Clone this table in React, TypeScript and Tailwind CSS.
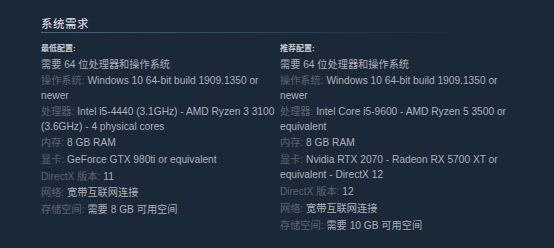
import React from 'react';

type Row = { label?: string; value: string };

const minimum: Row[] = [
  { value: '需要 64 位处理器和操作系统' },
  { label: '操作系统:', value: 'Windows 10 64-bit build 1909.1350 or newer' },
  { label: '处理器:', value: 'Intel i5-4440 (3.1GHz) - AMD Ryzen 3 3100 (3.6GHz) - 4 physical cores' },
  { label: '内存:', value: '8 GB RAM' },
  { label: '显卡:', value: 'GeForce GTX 980ti or equivalent' },
  { label: 'DirectX 版本:', value: '11' },
  { label: '网络:', value: '宽带互联网连接' },
  { label: '存储空间:', value: '需要 8 GB 可用空间' },
];

const recommended: Row[] = [
  { value: '需要 64 位处理器和操作系统' },
  { label: '操作系统:', value: 'Windows 10 64-bit build 1909.1350 or newer' },
  { label: '处理器:', value: 'Intel Core i5-9600 - AMD Ryzen 5 3500 or equivalent' },
  { label: '内存:', value: '8 GB RAM' },
  { label: '显卡:', value: 'Nvidia RTX 2070 - Radeon RX 5700 XT or equivalent - DirectX 12' },
  { label: 'DirectX 版本:', value: '12' },
  { label: '网络:', value: '宽带互联网连接' },
  { label: '存储空间:', value: '需要 10 GB 可用空间' },
];

function ReqColumn({ title, rows }: { title: string; rows: Row[] }) {
  return (
    <div className="w-[236px]">
      <div className="text-[8px] font-bold text-[#c6ccd2] leading-[12px] mb-[2px]">{title}</div>
      <ul className="text-[10.2px] leading-[15.6px] text-[#acb2b8]">
        {rows.map((r, i) => (
          <li key={i} className={i >= 4 ? 'mt-[1.2px]' : ''}>
            {r.label && <span className="text-[#5b6570]">{r.label} </span>}
            {r.value}
          </li>
        ))}
      </ul>
    </div>
  );
}

export default function App() {
  return (
    <div
      className="w-[554px] h-[248px] bg-[#1b2838] pl-[41px] pt-[16px] overflow-hidden"
      style={{ fontFamily: '"Liberation Sans", Arial, "Noto Sans CJK SC", sans-serif' }}
    >
      <h2 className="text-[11.5px] leading-[16px] text-[#e6ebf0] tracking-[0.5px]">系统需求</h2>
      <div className="mt-[0px] h-px w-[424px] bg-gradient-to-r from-[#3a6a8a] to-transparent" />
      <div className="flex gap-[3px] mt-[10px]">
        <ReqColumn title="最低配置:" rows={minimum} />
        <ReqColumn title="推荐配置:" rows={recommended} />
      </div>
    </div>
  );
}
